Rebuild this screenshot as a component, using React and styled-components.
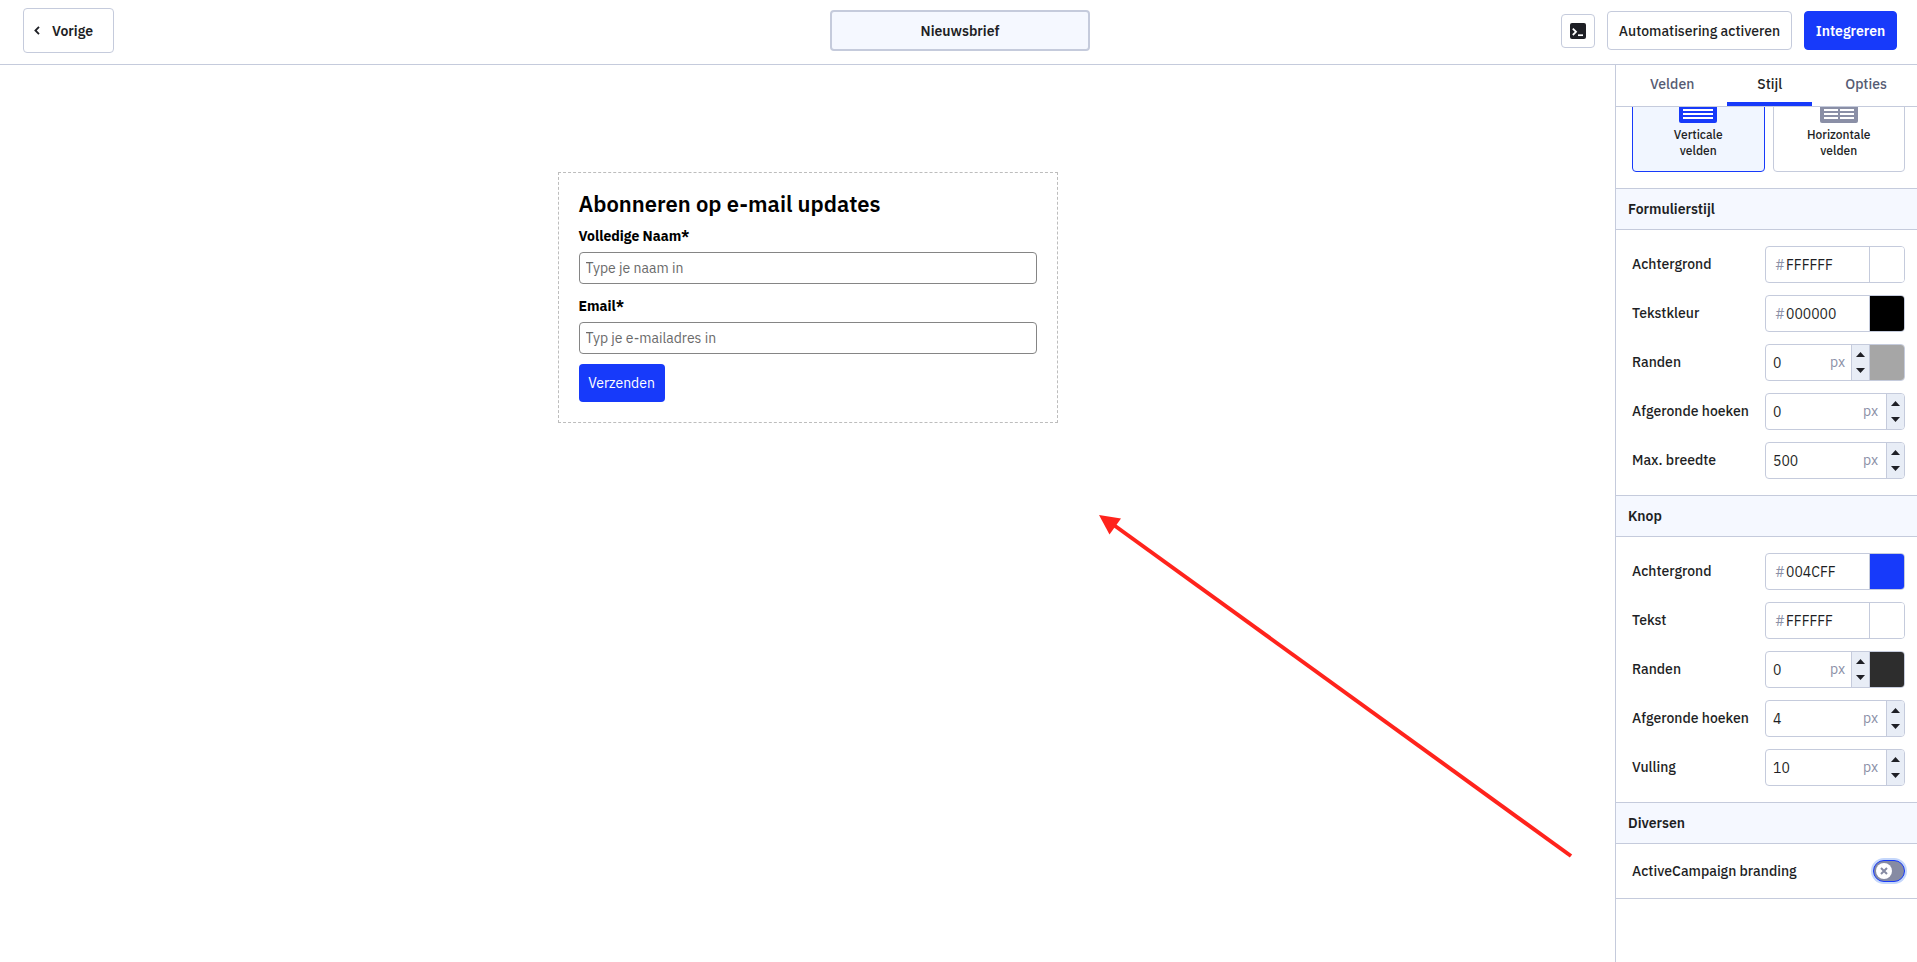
import React, { useId, useState } from 'react';
import styled, { createGlobalStyle, ThemeProvider, css } from 'styled-components';

const theme = {
  ink: '#1e1f25',
  muted: '#8a8fa6',
  tab: '#565b73',
  line: '#c5cbdc',
  blue: '#173afa',
  pale: '#f5f8ff',
};

const GlobalStyle = createGlobalStyle`
  *, *::before, *::after { box-sizing: border-box; }
  body { margin: 0; background: #fff; }
  body, button, input { font-family: 'IBM Plex Sans', Roboto, 'Liberation Sans', sans-serif; font-size: 14px; }
  button { cursor: pointer; }
`;

const Page = styled.div`
  display: flex;
  flex-direction: column;
  min-height: 100vh;
  color: ${(p) => p.theme.ink};
`;

/* Top bar */
const TopBar = styled.header`
  display: grid;
  grid-template-columns: 1fr 260px 1fr;
  align-items: center;
  height: 65px;
  padding: 0 20px 3px 23px;
  border-bottom: 1px solid ${(p) => p.theme.line};
`;

const Actions = styled.div`
  display: flex;
  align-items: center;
  justify-content: flex-end;
  gap: 12px;
`;

const buttonBase = css`
  display: inline-flex;
  align-items: center;
  justify-content: center;
  border: 1px solid ${(p) => p.theme.line};
  border-radius: 4px;
  background: #fff;
  color: ${(p) => p.theme.ink};
  font-weight: 500;
  white-space: nowrap;
`;

const BackButton = styled.button`
  ${buttonBase}
  justify-self: start;
  gap: 12px;
  height: 45px;
  width: 91px;
  padding: 0 10px 0 0;
  font-weight: 600;
`;

const FormName = styled.button`
  ${buttonBase}
  height: 41px;
  border-width: 2px;
  background: ${(p) => p.theme.pale};
  font-weight: 600;
`;

const IconButton = styled.button`
  ${buttonBase}
  width: 34px;
  height: 34px;
  padding: 0;
`;

const ActionButton = styled.button`
  ${buttonBase}
  height: 39px;
  min-width: ${(p) => (p.$primary ? 93 : 185)}px;
  padding: 0 10px;
  ${(p) =>
    p.$primary &&
    css`
      border-color: ${p.theme.blue};
      background: ${p.theme.blue};
      color: #fff;
      font-weight: 600;
    `}
`;

/* Workspace */
const Workspace = styled.div`
  display: flex;
  flex: 1;
`;

const Canvas = styled.main`
  position: relative;
  flex: 1;
  display: flex;
  justify-content: center;
  align-items: flex-start;
  padding: 107px 20px;
`;

const Form = styled.form`
  display: flex;
  flex-direction: column;
  align-items: flex-start;
  width: 500px;
  padding: 20px;
  border: 1px dashed #bdbdbd;
  color: #000;
`;

const FormTitle = styled.h1`
  margin: 0 0 11px;
  font-size: 22px;
  line-height: 22px;
  font-weight: 600;
`;

const Field = styled.div`
  display: flex;
  flex-direction: column;
  gap: 6px;
  width: 100%;
  margin-bottom: ${(p) => (p.$last ? 10 : 12)}px;
`;

const FieldLabel = styled.label`
  line-height: 20px;
  font-weight: 700;
`;

const FieldInput = styled.input`
  height: 32px;
  padding: 0 6px;
  border: 1px solid #858585;
  border-radius: 4px;
  background: #fff;
  &::placeholder { color: #6a6a6a; opacity: 1; }
`;

const Submit = styled.button`
  height: 38px;
  min-width: 86px;
  padding: 0 9px;
  border: 0;
  border-radius: 4px;
  background: ${(p) => p.theme.blue};
  color: #fff;
  font-weight: 400;
`;

const Arrow = styled.svg`
  position: absolute;
  left: 1095px;
  top: 446px;
  pointer-events: none;
`;

/* Sidebar */
const Sidebar = styled.aside`
  flex: none;
  width: 302px;
  border-left: 1px solid ${(p) => p.theme.line};
`;

const Tabs = styled.div`
  display: flex;
  gap: 3px;
  height: 42px;
  padding-left: 4px;
  border-bottom: 1px solid ${(p) => p.theme.line};
`;

const Tab = styled.button`
  padding: 0 30px;
  border: 0;
  border-bottom: 4px solid ${(p) => (p.$active ? p.theme.blue : 'transparent')};
  background: none;
  color: ${(p) => (p.$active ? p.theme.ink : p.theme.tab)};
  font-weight: 500;
`;

const LayoutChoices = styled.div`
  display: flex;
  align-items: flex-end;
  gap: 8px;
  height: 65px;
  margin-bottom: 16px;
  padding: 0 12px 0 16px;
  overflow: hidden;
`;

const Choice = styled.label`
  flex: 1;
  display: flex;
  flex-direction: column;
  align-items: center;
  gap: 4px;
  padding: 16px 24px 12px;
  border: 1px solid ${(p) => (p.$selected ? p.theme.blue : p.theme.line)};
  border-radius: 4px;
  background: ${(p) => (p.$selected ? '#f1f6ff' : '#fff')};
  font-size: 12px;
  line-height: 16px;
  font-weight: 500;
  text-align: center;
  cursor: pointer;
`;

const HiddenRadio = styled.input`
  appearance: none;
  width: 0;
  height: 0;
  margin: 0;
`;

const SectionTitle = styled.h2`
  margin: 0;
  padding: 0 12px;
  border: solid ${(p) => p.theme.line};
  border-width: 1px 0;
  background: ${(p) => p.theme.pale};
  font-size: 14px;
  line-height: 40px;
  font-weight: 600;
`;

const Rows = styled.div`
  display: flex;
  flex-direction: column;
  gap: 12px;
  padding: 16px 12px 16px 16px;
`;

const Row = styled.div`
  display: flex;
  align-items: center;
  justify-content: space-between;
`;

const RowLabel = styled.label`
  font-weight: 500;
`;

const SettingLabel = styled(RowLabel)`
  padding-bottom: 2px;
`;

const Control = styled.div`
  display: flex;
  align-items: stretch;
  width: 140px;
  height: 37px;
  border: 1px solid ${(p) => p.theme.line};
  border-radius: 4px;
  overflow: hidden;
`;

const Prefix = styled.span`
  align-self: center;
  padding-left: 9px;
  color: ${(p) => p.theme.muted};
`;

const Unit = styled.span`
  align-self: center;
  padding: 0 ${(p) => (p.$wide ? 8 : 6)}px 2px 0;
  color: ${(p) => p.theme.muted};
`;

const ValueInput = styled.input`
  flex: 1;
  min-width: 0;
  padding: 0 0 0 ${(p) => (p.$hex ? 1 : 7)}px;
  border: 0;
  outline: 0;
  background: none;
  color: ${(p) => p.theme.ink};
`;

const Swatch = styled.button`
  width: 35px;
  padding: 0;
  border: 0;
  border-left: 1px solid ${(p) => p.theme.line};
  background: ${(p) => p.$color};
`;

const Stepper = styled.div`
  display: flex;
  flex-direction: column;
  width: 18px;
  border-left: 1px solid ${(p) => p.theme.line};
  background: #e8edf6;
`;

const Step = styled.button`
  flex: 1;
  display: flex;
  align-items: center;
  justify-content: center;
  padding: ${(p) => (p.$down ? '0 0 2px' : '2px 0 0')};
  border: 0;
  background: none;
`;

const ToggleRow = styled(Row)`
  height: 55px;
  padding: 0 12px 0 16px;
  border-bottom: 1px solid ${(p) => p.theme.line};
`;

const Toggle = styled.span`
  position: relative;
  display: block;
  width: 32px;
  height: 22px;
`;

const ToggleInput = styled.input`
  appearance: none;
  display: block;
  width: 32px;
  height: 22px;
  margin: 0;
  border: 1px solid ${(p) => p.theme.blue};
  border-radius: 11px;
  background: #868ba3;
  box-shadow: 0 0 0 2px #c5d7fb;
`;

const Knob = styled.span`
  position: absolute;
  top: 3px;
  left: ${(p) => (p.$on ? 13 : 3)}px;
  display: flex;
  align-items: center;
  justify-content: center;
  width: 16px;
  height: 16px;
  border-radius: 50%;
  background: #fff;
  pointer-events: none;
`;

function Steps() {
  return (
    <Stepper>
      <Step type="button" aria-label="Verhogen">
        <svg width="9" height="5" viewBox="0 0 9 5"><path d="M0 5 4.5 0 9 5z" fill="#1e1f25" /></svg>
      </Step>
      <Step type="button" aria-label="Verlagen" $down>
        <svg width="9" height="5" viewBox="0 0 9 5"><path d="M0 0 4.5 5 9 0z" fill="#1e1f25" /></svg>
      </Step>
    </Stepper>
  );
}

function Setting({ label, value, hex, swatch }) {
  const id = useId();
  return (
    <Row>
      <SettingLabel htmlFor={id}>{label}</SettingLabel>
      <Control>
        {hex && <Prefix>#</Prefix>}
        <ValueInput id={id} $hex={hex} defaultValue={value} />
        {!hex && <Unit $wide={!swatch}>px</Unit>}
        {!hex && <Steps />}
        {swatch && <Swatch type="button" aria-label={`${label} kleur`} $color={swatch} />}
      </Control>
    </Row>
  );
}

const formSettings = [
  { label: 'Achtergrond', value: 'FFFFFF', hex: true, swatch: '#ffffff' },
  { label: 'Tekstkleur', value: '000000', hex: true, swatch: '#000000' },
  { label: 'Randen', value: '0', swatch: '#a6a6a6' },
  { label: 'Afgeronde hoeken', value: '0' },
  { label: 'Max. breedte', value: '500' },
];

const buttonSettings = [
  { label: 'Achtergrond', value: '004CFF', hex: true, swatch: '#173afa' },
  { label: 'Tekst', value: 'FFFFFF', hex: true, swatch: '#ffffff' },
  { label: 'Randen', value: '0', swatch: '#2d2d2d' },
  { label: 'Afgeronde hoeken', value: '4' },
  { label: 'Vulling', value: '10' },
];

const tabNames = ['Velden', 'Stijl', 'Opties'];

export default function App() {
  const [tab, setTab] = useState('Stijl');
  const [layout, setLayout] = useState('vertical');
  const [branding, setBranding] = useState(false);

  return (
    <ThemeProvider theme={theme}>
      <GlobalStyle />
      <Page>
        <TopBar>
          <BackButton type="button">
            <svg width="6" height="9" viewBox="0 0 6 9" fill="none" stroke="#1e1f25" strokeWidth="1.8">
              <path d="M5 .8 1.4 4.5 5 8.2" />
            </svg>
            Vorige
          </BackButton>
          <FormName type="button">Nieuwsbrief</FormName>
          <Actions>
            <IconButton type="button" aria-label="Code">
              <svg width="16" height="16" viewBox="0 0 16 16" fill="none">
                <rect width="16" height="16" rx="2" fill="#1e1f25" />
                <path d="M2.8 5.6 6 8.8 2.8 12" stroke="#fff" strokeWidth="1.8" />
                <path d="M8 12.2h5" stroke="#fff" strokeWidth="1.7" />
              </svg>
            </IconButton>
            <ActionButton type="button">Automatisering activeren</ActionButton>
            <ActionButton type="button" $primary>Integreren</ActionButton>
          </Actions>
        </TopBar>

        <Workspace>
          <Canvas>
            <Form onSubmit={(e) => e.preventDefault()}>
              <FormTitle>Abonneren op e-mail updates</FormTitle>
              <Field>
                <FieldLabel htmlFor="fullname">Volledige Naam*</FieldLabel>
                <FieldInput id="fullname" type="text" placeholder="Type je naam in" />
              </Field>
              <Field $last>
                <FieldLabel htmlFor="email">Email*</FieldLabel>
                <FieldInput id="email" type="email" placeholder="Typ je e-mailadres in" />
              </Field>
              <Submit type="submit">Verzenden</Submit>
            </Form>
            <Arrow width="480" height="350" viewBox="0 0 480 350" aria-hidden="true">
              <path d="M16 12 476 345" stroke="#ff231c" strokeWidth="4" />
              <path d="M4 4 26 7.5 14.5 23.5z" fill="#ff231c" />
            </Arrow>
          </Canvas>

          <Sidebar>
            <Tabs role="tablist">
              {tabNames.map((name) => (
                <Tab key={name} type="button" role="tab" aria-selected={tab === name} $active={tab === name} onClick={() => setTab(name)}>
                  {name}
                </Tab>
              ))}
            </Tabs>

            <LayoutChoices>
              <Choice $selected={layout === 'vertical'}>
                <HiddenRadio type="radio" name="layout" checked={layout === 'vertical'} onChange={() => setLayout('vertical')} />
                <svg width="38" height="30" viewBox="0 0 38 30">
                  <rect width="38" height="30" rx="2" fill="#173afa" />
                  <path d="M4 5h30M4 9h30M4 13h30M4 17h30M4 21h30M4 25h30" stroke="#fff" strokeWidth="2" />
                </svg>
                <span>Verticale<br />velden</span>
              </Choice>
              <Choice $selected={layout === 'horizontal'}>
                <HiddenRadio type="radio" name="layout" checked={layout === 'horizontal'} onChange={() => setLayout('horizontal')} />
                <svg width="38" height="30" viewBox="0 0 38 30">
                  <rect width="38" height="30" rx="2" fill="#8a8fa6" />
                  <path d="M4 5h14m2 0h14M4 9h14m2 0h14M4 13h14m2 0h14M4 17h14m2 0h14M4 21h14m2 0h14M4 25h14m2 0h14" stroke="#fff" strokeWidth="2" />
                </svg>
                <span>Horizontale<br />velden</span>
              </Choice>
            </LayoutChoices>

            <SectionTitle>Formulierstijl</SectionTitle>
            <Rows>
              {formSettings.map((s) => <Setting key={s.label} {...s} />)}
            </Rows>

            <SectionTitle>Knop</SectionTitle>
            <Rows>
              {buttonSettings.map((s) => <Setting key={s.label} {...s} />)}
            </Rows>

            <SectionTitle>Diversen</SectionTitle>
            <ToggleRow>
              <RowLabel htmlFor="branding">ActiveCampaign branding</RowLabel>
              <Toggle>
                <ToggleInput id="branding" type="checkbox" role="switch" checked={branding} onChange={() => setBranding(!branding)} />
                <Knob $on={branding}>
                  <svg width="8" height="8" viewBox="0 0 8 8" stroke="#868ba3" strokeWidth="2">
                    <path d="M1 1l6 6M7 1 1 7" />
                  </svg>
                </Knob>
              </Toggle>
            </ToggleRow>
          </Sidebar>
        </Workspace>
      </Page>
    </ThemeProvider>
  );
}
